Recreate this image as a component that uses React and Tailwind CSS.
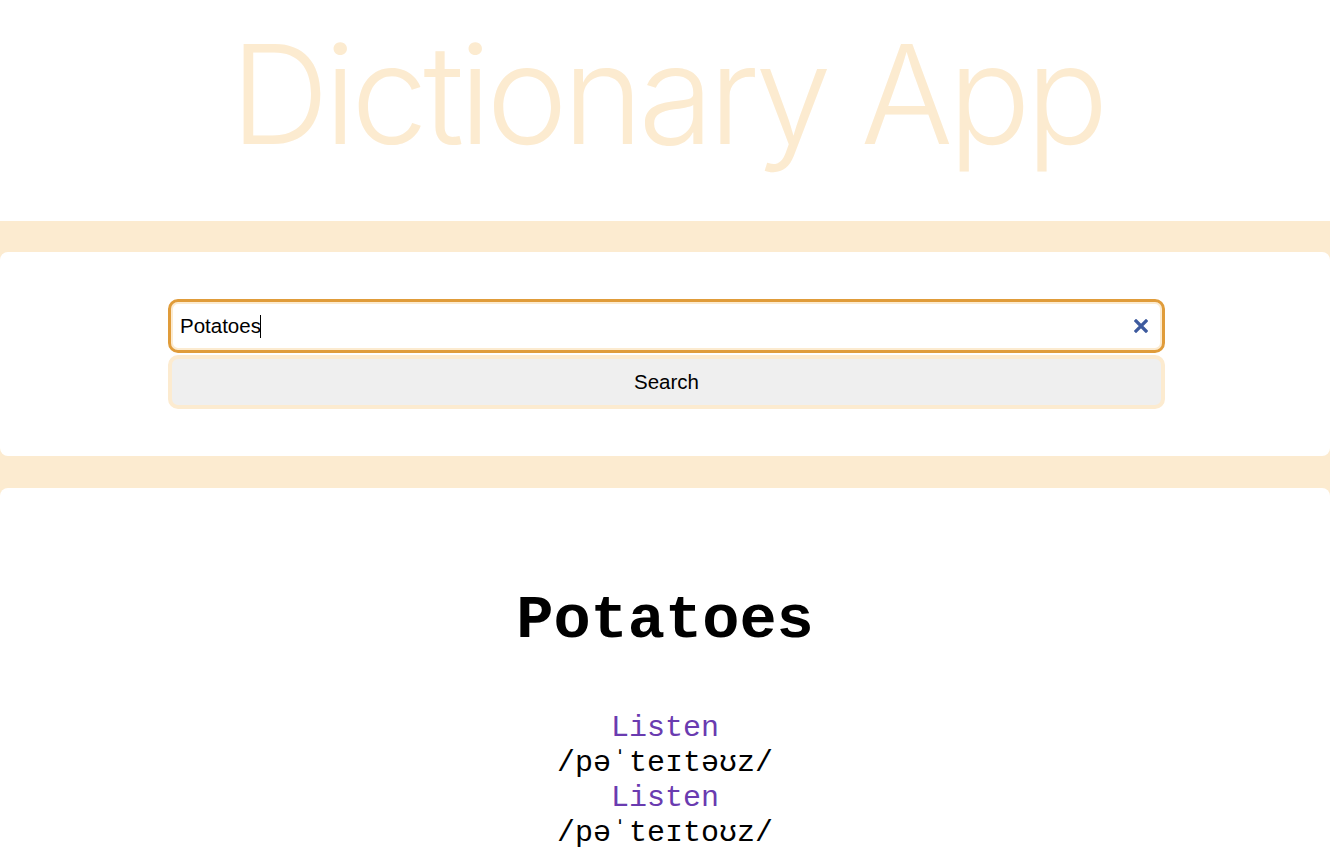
export default function App() {
  return (
    <div className="min-h-screen bg-white">
      {/* Header */}
      <div className="h-[221px] flex justify-center pl-[4px]">
        <h1 className="mt-[12px] text-[137px] leading-[1.21] font-light tracking-[-4.8px] text-[#fcebd0] font-['Inter',sans-serif]">
          Dictionary App
        </h1>
      </div>

      {/* Search */}
      <div className="bg-[#fcebd0] pt-[31px] pb-[32px]">
        <div className="bg-white rounded-lg py-[47px] pl-[3px] flex flex-col items-center gap-[2px]">
          <div className="w-[997px] h-[54px] rounded-[10px] border-[3px] border-[#e09c3a] shadow-[inset_0_0_0_2px_#fcebd0] flex items-center pl-[9px] pr-[14px] font-['Liberation_Sans',sans-serif] text-[20.5px] text-black">
            <span>Potatoes</span>
            <span className="-ml-[1px] w-px h-[23px] bg-black"></span>
            <span className="flex-1"></span>
            <svg width="14" height="14" viewBox="0 0 14 14">
              <path d="M2 2 L12 12 M12 2 L2 12" stroke="#3d5a9e" strokeWidth="3.2" strokeLinecap="square" />
            </svg>
          </div>
          <div className="w-[997px] h-[54px] rounded-[10px] border-[4px] border-[#fcebd0] bg-[#efefef] flex items-center justify-center font-['Liberation_Sans',sans-serif] text-[20.5px] text-black">
            Search
          </div>
        </div>
      </div>

      {/* Result */}
      <div className="bg-[#fcebd0]">
        <div className="bg-white rounded-t-lg pt-[96px] pb-10 flex flex-col items-center font-['Liberation_Mono',monospace]">
          <h2 className="text-[62px] font-bold leading-[1.2] text-black">Potatoes</h2>
          <div className="mt-[53px] flex flex-col items-center text-[30px] leading-[35px]">
            <span className="text-[#6a3bb0]">Listen</span>
            <span className="text-black">/pəˈteɪtəʊz/</span>
            <span className="text-[#6a3bb0]">Listen</span>
            <span className="text-black">/pəˈteɪtoʊz/</span>
          </div>
        </div>
      </div>
    </div>
  );
}
